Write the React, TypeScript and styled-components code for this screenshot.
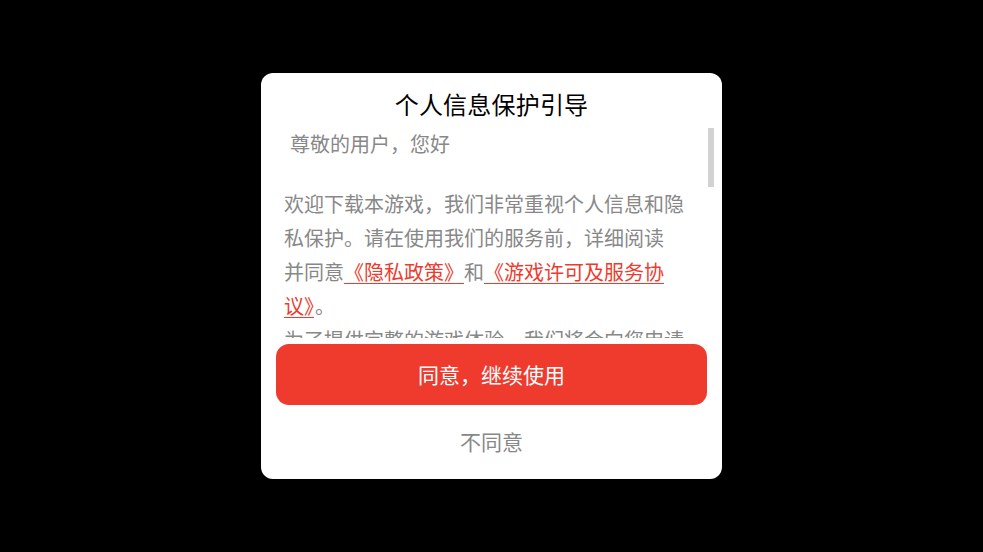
import React from "react";
import styled, { createGlobalStyle } from "styled-components";

const GlobalStyle = createGlobalStyle`
  html, body {
    margin: 0;
    padding: 0;
    background: #000;
  }
  body {
    font-family: "Noto Sans CJK SC", "Noto Sans", sans-serif;
  }
`;

const Screen = styled.div`
  width: 100vw;
  height: 100vh;
  display: flex;
  align-items: center;
  justify-content: center;
  background: #000;
`;

const Dialog = styled.div`
  width: 461px;
  height: 406px;
  background: #fff;
  border-radius: 12px;
  display: flex;
  flex-direction: column;
  overflow: hidden;
`;

const Title = styled.div`
  padding: 14px 0 7px;
  line-height: 34px;
  font-size: 24px;
  letter-spacing: 0.2px;
  color: #000;
  text-align: center;
`;

const ScrollFrame = styled.div`
  position: relative;
  height: 210px;
  margin: 0 8px 0 23px;
  flex-shrink: 0;
`;

const ScrollArea = styled.div`
  height: 100%;
  padding-right: 22px;
  overflow-y: scroll;
  scrollbar-width: none;
  color: #888;
  font-size: 20px;

  &::-webkit-scrollbar {
    display: none;
  }
`;

// scroll indicator drawn over the right edge of the text area
const ScrollThumb = styled.div<{ $size: number }>`
  position: absolute;
  top: 0;
  right: 0;
  width: 6px;
  height: ${(p) => p.$size}px;
  background: #d2d2d2;
  pointer-events: none;
`;

const Greeting = styled.div`
  line-height: 32px;
  padding-left: 6px;
  margin-bottom: 27px;
`;

const Paragraph = styled.p`
  margin: 0;
  line-height: 34px;
`;

const Link = styled.a`
  color: #ee3b2e;
  text-decoration: underline;
  text-underline-offset: 3px;
  text-decoration-thickness: 1px;
`;

const Period = styled.span`
  padding-left: 1px;
`;

const AgreeButton = styled.button`
  margin: 6px 15px 0;
  height: 61px;
  flex-shrink: 0;
  border: none;
  border-radius: 13px;
  background: #ee3b2e;
  color: #fff;
  font-family: inherit;
  font-size: 21px;
  line-height: 57px;
  cursor: pointer;
`;

const RejectButton = styled.button`
  padding: 16px 0 18px;
  line-height: 40px;
  border: none;
  background: transparent;
  color: #888;
  font-family: inherit;
  font-size: 21px;
  cursor: pointer;
`;

const paragraphs = [
  "为了提供完整的游戏体验，我们将会向您申请必要的权限，您可以在系统设置中随时关闭这些权限。",
  "1. 存储权限：用于缓存游戏资源与图片，减少流量消耗，提升加载速度。",
  "2. 设备信息：用于识别设备、保障账号安全及防止作弊行为。",
  "3. 网络权限：用于连接游戏服务器，保证正常的游戏服务。",
  "我们会严格按照法律法规的要求保护您的个人信息，未经您的同意不会向第三方提供。",
];

export default function App() {
  return (
    <>
      <GlobalStyle />
      <Screen>
        <Dialog>
          <Title>个人信息保护引导</Title>
          <ScrollFrame>
            <ScrollArea>
              <Greeting>尊敬的用户，您好</Greeting>
              <Paragraph>
                欢迎下载本游戏，我们非常重视个人信息和隐私保护。请在使用我们的服务前，详细阅读
                <br />
                并同意<Link>《隐私政策》</Link>和<Link>《游戏许可及服务协议》</Link>
                <Period>。</Period>
              </Paragraph>
              {paragraphs.map((text) => (
                <Paragraph key={text}>{text}</Paragraph>
              ))}
            </ScrollArea>
            <ScrollThumb $size={59} />
          </ScrollFrame>
          <AgreeButton>同意，继续使用</AgreeButton>
          <RejectButton>不同意</RejectButton>
        </Dialog>
      </Screen>
    </>
  );
}
